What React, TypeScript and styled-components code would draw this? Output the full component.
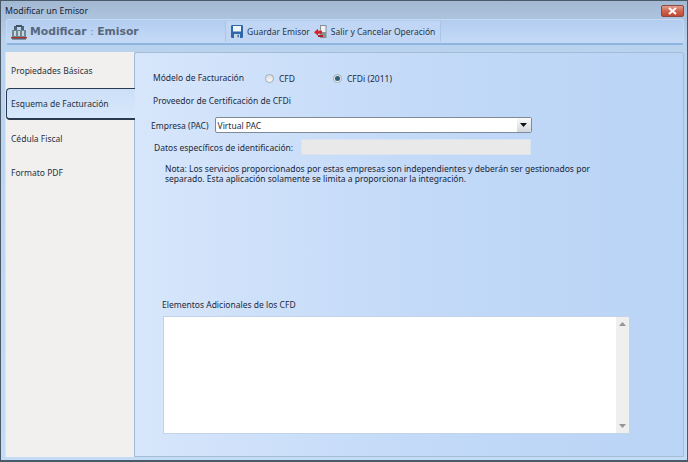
import { FC } from "react";
import styled, { createGlobalStyle } from "styled-components";

const GlobalStyle = createGlobalStyle`
  html, body {
    margin: 0;
    padding: 0;
    background: #b9d3f2;
  }
  body {
    font-family: "Noto Sans", "Open Sans", sans-serif;
    font-size: 8.5px;
    color: #1e2a3c;
  }
`;

const TABS = ["Propiedades Básicas", "Esquema de Facturación", "Cédula Fiscal", "Formato PDF"];

const BuildingIcon: FC = () => (
  <svg width="16" height="16" viewBox="0 0 16 16">
    <path d="M1 6h14v7H1z" fill="#6d8795" />
    <path d="M3 2h3v4H3zM10 2h3v4h-3z" fill="#4c6572" />
    <path d="M5 1h6v2H5z" fill="#3f5360" />
    <path d="M3 7h2v5H3zM7 7h2v5H7zM11 7h2v5h-2z" fill="#c8d8d8" />
    <path d="M0 13h16v1.4H0z" fill="#b5322c" />
    <path d="M1 14.4h14v1H1z" fill="#27343c" />
  </svg>
);

const SaveIcon: FC = () => (
  <svg width="12" height="13" viewBox="0 0 12 13">
    <path d="M0 1.2Q0 0 1.2 0h9.6Q12 0 12 1.2v10.6q0 1.2-1.2 1.2H1.2Q0 13 0 11.8z" fill="#2f68a8" />
    <path d="M2 1h8v5.5H2z" fill="#eef4fa" />
    <path d="M3 9h6v4H3z" fill="#c9d6e4" />
    <path d="M6.5 9.8h1.4v2.4H6.5z" fill="#2f68a8" />
  </svg>
);

const ExitIcon: FC = () => (
  <svg width="13" height="13" viewBox="0 0 13 13">
    <path d="M6 0h6.5v13H6z" fill="#8b8f94" />
    <path d="M7 1h4.5v6H7z" fill="#f2f2f2" />
    <path d="M0 7.2l4-3.4v2h4v3h-4v2z" fill="#d8232a" />
    <path d="M4 10h5v2H4z" fill="#a8262a" />
  </svg>
);

const Radio: FC<{ checked?: boolean }> = ({ checked }) => (
  <RadioCircle>{checked && <RadioDot />}</RadioCircle>
);

export default function App() {
  return (
    <>
      <GlobalStyle />
      <Window>
        <TitleBar>
          <span>Modificar un Emisor</span>
          <CloseButton>
            <svg width="9" height="8" viewBox="0 0 9 8">
              <path d="M1 1l7 6M8 1L1 7" stroke="#fff" strokeWidth="2" />
            </svg>
          </CloseButton>
        </TitleBar>
        <Toolbar>
          <Brand>
            <BuildingIcon />
            <BrandText>
              Modificar<BrandColon> : </BrandColon>Emisor
            </BrandText>
          </Brand>
          <ActionGroup>
            <Action>
              <SaveIcon />
              Guardar Emisor
            </Action>
            <Action>
              <ExitIcon />
              Salir y Cancelar Operación
            </Action>
          </ActionGroup>
        </Toolbar>
        <Body>
          <Sidebar>
            {TABS.map((tab, i) => (
              <Tab key={tab} $active={i === 1}>
                {tab}
              </Tab>
            ))}
          </Sidebar>
          <Panel>
            <ModelRow>
              <ModelLabel>Módelo de Facturación</ModelLabel>
              <RadioOption $width={68}>
                <Radio />
                CFD
              </RadioOption>
              <RadioOption>
                <Radio checked />
                CFDi (2011)
              </RadioOption>
            </ModelRow>
            <ProviderTitle>Proveedor de Certificación de CFDi</ProviderTitle>
            <CompanyRow>
              <span>Empresa (PAC)</span>
              <Combo>
                Virtual PAC
                <ComboArrow>
                  <svg width="7" height="4" viewBox="0 0 7 4">
                    <path d="M0 0h7L3.5 4z" fill="#111" />
                  </svg>
                </ComboArrow>
              </Combo>
            </CompanyRow>
            <DataRow>
              <span>Datos específicos de identificación:</span>
              <DisabledInput />
            </DataRow>
            <Note>
              Nota: Los servicios proporcionados por estas empresas son independientes y deberán ser gestionados por
              separado. Esta aplicación solamente se limita a proporcionar la integración.
            </Note>
            <ExtrasTitle>Elementos Adicionales de los CFD</ExtrasTitle>
            <TextBox>
              <ScrollTrack>
                <svg width="7" height="4" viewBox="0 0 7 4">
                  <path d="M0 4h7L3.5 0z" fill="#8f969c" />
                </svg>
                <svg width="7" height="4" viewBox="0 0 7 4">
                  <path d="M0 0h7L3.5 4z" fill="#8f969c" />
                </svg>
              </ScrollTrack>
            </TextBox>
          </Panel>
        </Body>
      </Window>
    </>
  );
}

const Window = styled.div`
  box-sizing: border-box;
  width: 688px;
  height: 462px;
  display: flex;
  flex-direction: column;
  padding: 0 3px 3px 4px;
  border: 1px solid #4a5a68;
  border-bottom-width: 2px;
  background: linear-gradient(#a3b8d2 0, #b9d2ee 40px, #c4dbf5 100%);
`;

const TitleBar = styled.div`
  flex: none;
  height: 18px;
  display: flex;
  align-items: center;
  justify-content: space-between;
  font-size: 8.8px;
  color: #17222e;
  padding-top: 2px;
  box-sizing: border-box;
`;

const CloseButton = styled.div`
  width: 21px;
  height: 10px;
  margin-top: -1px;
  display: flex;
  align-items: center;
  justify-content: center;
  border: 1px solid #8c4a3e;
  border-radius: 2px;
  background: linear-gradient(#e0a090 0, #d2624e 50%, #c04a34 100%);
`;

const Toolbar = styled.div`
  flex: none;
  height: 26px;
  margin-left: 1px;
  display: flex;
  align-items: center;
  box-sizing: border-box;
  border: 1px solid #c6daf4;
  border-bottom: 2px solid #8eb4e0;
  border-radius: 3px;
  background: linear-gradient(#b3cdf0, #c5daf6);
`;

const Brand = styled.div`
  width: 218px;
  padding-left: 4px;
  box-sizing: border-box;
  display: flex;
  align-items: center;
  gap: 3px;
`;

const BrandText = styled.span`
  font-family: "DejaVu Sans", sans-serif;
  font-weight: 700;
  font-size: 10.8px;
  color: #58687c;
  white-space: pre;
`;

const BrandColon = styled.span`
  font-weight: 400;
  color: #7d8da0;
`;

const ActionGroup = styled.div`
  height: 21px;
  display: flex;
  align-items: center;
  gap: 4px;
  padding: 0 5px;
  box-sizing: border-box;
  border-left: 1px solid #a9c5ea;
  border-right: 1px solid #a9c5ea;
  border-radius: 2px;
  background: #c0d6f4;
`;

const Action = styled.div`
  display: flex;
  align-items: center;
  gap: 4px;
  color: #26364a;
  white-space: nowrap;
`;

const Body = styled.div`
  flex: 1;
  min-height: 0;
  display: flex;
`;

const Sidebar = styled.div`
  width: 129px;
  flex: none;
  margin-top: 7px;
  padding-top: 2px;
  background: #f1f0ef;
  border-left: 1px solid #d8e4f0;
  box-sizing: border-box;
`;

const Tab = styled.div<{ $active?: boolean }>`
  height: 32px;
  margin-bottom: 2px;
  display: flex;
  align-items: center;
  padding-left: 5px;
  box-sizing: border-box;
  color: #26323e;
  ${(p) =>
    p.$active &&
    `
    background: linear-gradient(#cbdff8, #d9e8fb);
    border: 1px solid #2a3a50;
    border-right: none;
    border-bottom-width: 2px;
    border-radius: 4px 0 0 4px;
    padding-left: 4px;
    margin-right: -1px;
    position: relative;
  `}
`;

const Panel = styled.div`
  flex: 1;
  min-width: 0;
  margin-top: 7px;
  padding: 18px 0 0 18px;
  box-sizing: border-box;
  background: linear-gradient(90deg, #d7e6fb 0, #c3daf8 50%, #bad4f6 100%);
  border: 1px solid #a5bbd6;
  border-radius: 3px 3px 0 0;
  display: flex;
  flex-direction: column;
`;

const ModelRow = styled.div`
  display: flex;
  align-items: center;
  height: 14px;
`;

const ModelLabel = styled.span`
  width: 112px;
  margin-top: -2px;
`;

const RadioOption = styled.div<{ $width?: number }>`
  display: flex;
  align-items: center;
  gap: 5px;
  ${(p) => p.$width && `width: ${p.$width}px;`}
  margin-top: 1px;
`;

const RadioCircle = styled.span`
  width: 7px;
  height: 7px;
  border-radius: 50%;
  border: 1px solid #a3acb6;
  background: linear-gradient(#d8dde2, #f8f8f8);
  display: flex;
  align-items: center;
  justify-content: center;
`;

const RadioDot = styled.span`
  width: 5px;
  height: 5px;
  border-radius: 50%;
  background: #2c5f78;
`;

const ProviderTitle = styled.div`
  margin-top: 9px;
  height: 14px;
  line-height: 14px;
`;

const CompanyRow = styled.div`
  margin: 9px 0 0 -2px;
  display: flex;
  align-items: center;
  gap: 6px;
`;

const Combo = styled.div`
  width: 317px;
  height: 16px;
  box-sizing: border-box;
  padding-left: 2px;
  display: flex;
  align-items: center;
  justify-content: space-between;
  background: #fff;
  border: 1px solid #7f8a96;
  border-radius: 2px;
`;

const ComboArrow = styled.span`
  width: 14px;
  height: 14px;
  display: flex;
  align-items: center;
  justify-content: center;
  background: linear-gradient(#fafafa, #d3d8de);
`;

const DataRow = styled.div`
  margin: 6px 0 0 1px;
  display: flex;
  align-items: center;
  gap: 8px;
`;

const DisabledInput = styled.div`
  width: 230px;
  height: 16px;
  background: #e9e9e9;
  border: 1px solid #dbe4ee;
  box-sizing: border-box;
`;

const Note = styled.p`
  width: 430px;
  margin: 9px 0 0 12px;
  line-height: 10px;
  color: #1a2636;
`;

const ExtrasTitle = styled.div`
  margin: 114px 0 0 9px;
  height: 13px;
  line-height: 13px;
`;

const TextBox = styled.div`
  width: 467px;
  height: 118px;
  margin: 5px 0 0 10px;
  box-sizing: border-box;
  background: #fff;
  border: 1px solid #c4d4e8;
  display: flex;
  justify-content: flex-end;
`;

const ScrollTrack = styled.div`
  width: 13px;
  padding: 5px 0;
  box-sizing: border-box;
  background: #efefef;
  display: flex;
  flex-direction: column;
  justify-content: space-between;
  align-items: center;
`;
